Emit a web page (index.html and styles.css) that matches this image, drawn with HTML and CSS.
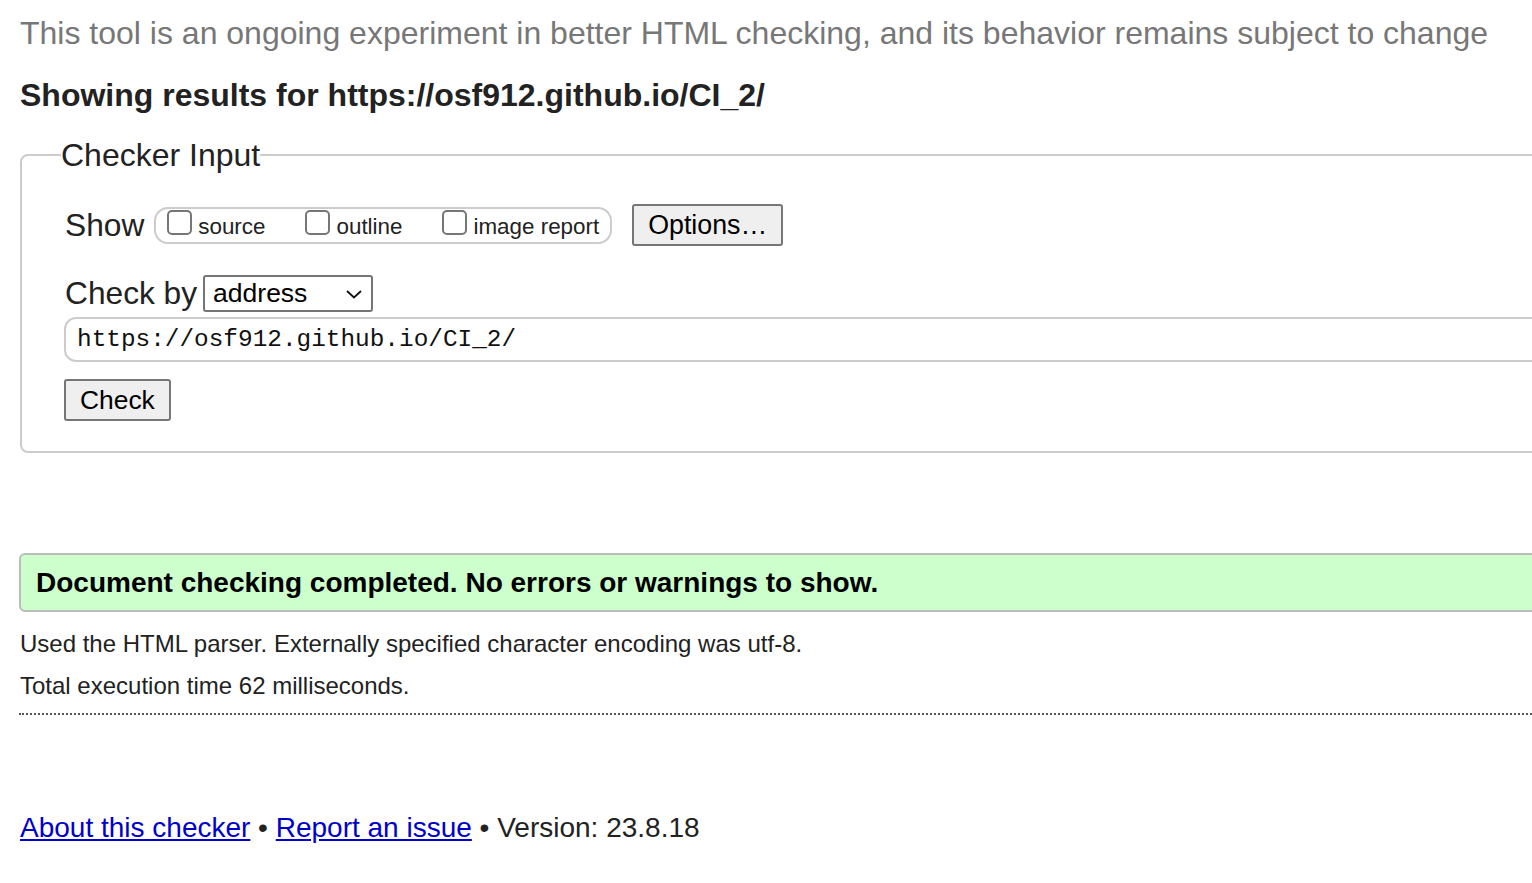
FILE: index.html
```html
<!DOCTYPE html>
<html lang="en">
<head>
<meta charset="utf-8">
<title>Nu Html Checker</title>
<link rel="stylesheet" href="styles.css">
</head>
<body>
<p class="intro">This tool is an ongoing experiment in better HTML checking, and its behavior remains subject to change</p>
<h2 class="results">Showing results for https://osf912.github.io/CI_2/</h2>
<form class="checker">
  <fieldset class="input-set">
    <legend class="legend">Checker Input</legend>
    <div class="row show-row">
      <span class="label">Show</span>
      <div class="show-group">
        <label class="opt"><span class="box"></span>source</label>
        <label class="opt"><span class="box"></span>outline</label>
        <label class="opt"><span class="box"></span>image report</label>
      </div>
      <button type="button" class="btn options">Options…</button>
    </div>
    <div class="row by-row">
      <span class="label">Check by</span>
      <div class="select"><span>address</span>
        <svg class="chev" width="18" height="12" viewBox="0 0 18 12"><path d="M2 3 L9 9.5 L16 3" fill="none" stroke="#111" stroke-width="1.8"/></svg>
      </div>
    </div>
    <div class="url">https://osf912.github.io/CI_2/</div>
    <div class="row"><button type="button" class="btn check">Check</button></div>
  </fieldset>
</form>
<div class="success">Document checking completed. No errors or warnings to show.</div>
<p class="details">Used the HTML parser. Externally specified character encoding was utf-8.</p>
<p class="details time">Total execution time 62 milliseconds.</p>
<hr class="dots">
<p class="footer"><a href="#">About this checker</a> • <a href="#">Report an issue</a> • Version: 23.8.18</p>
</body>
</html>
```
FILE: styles.css
```css
html { overflow: hidden; }
body {
  margin: 0;
  padding: 0 0 0 20px;
  width: 1600px;
  font-family: "Liberation Sans", Arial, sans-serif;
  color: #222;
  background: #fff;
}
.intro {
  margin: 0;
  padding-top: 14px;
  font-size: 32px;
  line-height: 38px;
  color: #777;
}
.results {
  margin: 24px 0 0 0;
  font-size: 32px;
  line-height: 38px;
  font-weight: bold;
  color: #222;
}
.checker { margin: 0; }
.input-set {
  margin: 22px 0 0 0;
  padding: 17px 0 30px 44px;
  border: 2px solid #ccc;
  border-radius: 8px;
}
.legend {
  padding: 0;
  margin-left: -5px;
  font-size: 32px;
  line-height: 38px;
  color: #222;
}
.row { display: flex; align-items: center; }
.label { font-size: 31.7px; color: #222; }
.show-row { gap: 10px; margin-top: 13px; margin-left: -1px; }
.show-group {
  display: flex;
  align-items: center;
  gap: 40px;
  padding: 0 11px 0 11px;
  height: 37px;
  box-sizing: border-box;
  border: 2px solid #ccc;
  border-radius: 14px;
}
.opt {
  display: flex;
  align-items: center;
  font-size: 22.4px;
  color: #222;
  padding-top: 4px;
}
.box {
  width: 25px;
  height: 25px;
  box-sizing: border-box;
  border: 2px solid #767676;
  border-radius: 5px;
  margin-right: 6px;
  margin-top: -10px;
}
.btn {
  font-family: "Liberation Sans", Arial, sans-serif;
  background: #efefef;
  border: 2px solid #767676;
  border-radius: 3px;
  color: #000;
  padding: 0 14px;
  height: 42px;
}
.options { margin-left: 10px; font-size: 26.8px; }
.by-row { gap: 6px; margin-top: 29px; margin-left: -1px; }
.select {
  display: flex;
  align-items: center;
  justify-content: space-between;
  width: 170px;
  height: 37px;
  box-sizing: border-box;
  border: 2px solid #767676;
  border-radius: 3px;
  padding: 0 8px 0 8px;
  font-size: 26.5px;
  color: #000;
}
.url {
  margin-top: 5px;
  margin-left: -2px;
  height: 45px;
  box-sizing: border-box;
  border: 2px solid #ccc;
  border-radius: 12px;
  padding: 0 11px;
  display: flex;
  align-items: center;
  font-family: "Liberation Mono", "DejaVu Sans Mono", monospace;
  font-size: 24.4px;
  color: #111;
}
.check { margin-top: 17px; margin-left: -2px; font-size: 26.4px; padding: 0 14px; }
.success {
  margin: 100px 0 0 -1px;
  height: 59px;
  box-sizing: border-box;
  display: flex;
  align-items: center;
  padding-left: 15px;
  background: #ccffcc;
  border: 2px solid #bbb;
  border-radius: 6px;
  font-size: 28px;
  font-weight: bold;
  color: #000;
}
.details {
  margin: 16px 0 0 0;
  font-size: 24px;
  line-height: 32px;
  color: #222;
}
.time { margin-top: 10px; }
.dots {
  margin: 11px 0 0 -1px;
  border: 0;
  border-top: 2px dotted #555;
  height: 0;
}
.footer {
  margin: 96px 0 0 0;
  font-size: 28px;
  line-height: 34px;
  color: #222;
}
.footer a { color: #0000cc; }
```
